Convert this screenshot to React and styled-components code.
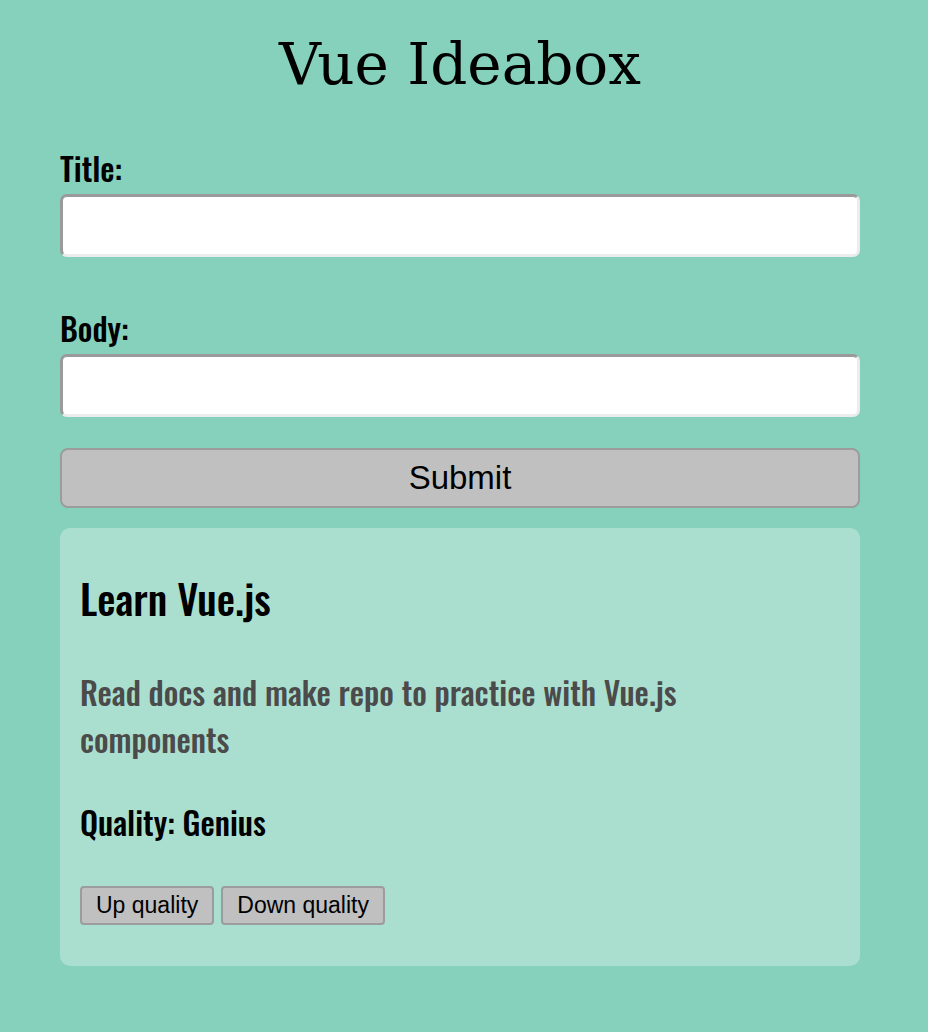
import React from 'react';
import styled, { createGlobalStyle } from 'styled-components';

const GlobalStyle = createGlobalStyle`
  html, body {
    margin: 0;
    padding: 0;
    background: #86d1bb;
  }
`;

const condensed = `"Oswald", "Liberation Sans Narrow", "DejaVu Sans Condensed", sans-serif`;

const Page = styled.div`
  width: 800px;
  padding: 0 60px 60px;
`;

const Heading = styled.h1`
  margin: 0;
  padding-top: 26px;
  text-align: center;
  font-family: "DejaVu Serif", "Liberation Serif", serif;
  font-weight: normal;
  font-size: 58px;
  line-height: 76px;
  color: #000;
`;

const Form = styled.form`
  display: flex;
  flex-direction: column;
  margin-top: 46px;
`;

const Label = styled.label`
  font-family: ${condensed};
  font-weight: 500;
  font-size: 32px;
  line-height: 40px;
  color: #000;
  margin-top: ${p => p.first ? '0' : '51px'};
`;

const Input = styled.input`
  box-sizing: border-box;
  width: 100%;
  height: 63px;
  margin-top: 6px;
  border: 3px solid;
  border-color: #9a9a9a #ececec #ececec #9a9a9a;
  border-radius: 7px;
  background: #fff;
  font-size: 24px;
  padding: 0 12px;
  outline: none;
`;

const SubmitButton = styled.button`
  box-sizing: border-box;
  width: 100%;
  height: 60px;
  margin-top: 31px;
  background: #c0c0c0;
  border: 2px solid #9c9c9c;
  border-radius: 8px;
  font-family: "Liberation Sans", Arial, sans-serif;
  font-size: 33px;
  color: #000;
`;

const Card = styled.div`
  margin-top: 20px;
  background: #aadfcf;
  border-radius: 10px;
  padding: 40px 20px 41px;
  font-family: ${condensed};
  font-weight: 500;
`;

const CardTitle = styled.h2`
  margin: 0;
  font-size: 41px;
  font-weight: 500;
  line-height: 60px;
  color: #000;
`;

const CardBody = styled.p`
  margin: 40px 0 0;
  font-size: 32px;
  line-height: 47px;
  color: #4b4b4b;
  max-width: 640px;
`;

const Quality = styled.p`
  margin: 38px 0 0;
  font-size: 32px;
  line-height: 44px;
  color: #000;
`;

const Actions = styled.div`
  display: flex;
  gap: 7px;
  margin-top: 42px;
`;

const SmallButton = styled.button`
  height: 39px;
  padding: 0 14px;
  background: #c0c0c0;
  border: 2px solid #9c9c9c;
  border-radius: 4px;
  font-family: "Liberation Sans", Arial, sans-serif;
  font-size: 23px;
  color: #000;
`;

export default function App() {
  return (
    <>
      <GlobalStyle />
      <Page>
        <Heading>Vue Ideabox</Heading>
        <Form onSubmit={e => e.preventDefault()}>
          <Label first htmlFor="title">Title:</Label>
          <Input id="title" type="text" />
          <Label htmlFor="body">Body:</Label>
          <Input id="body" type="text" />
          <SubmitButton type="submit">Submit</SubmitButton>
        </Form>
        <Card>
          <CardTitle>Learn Vue.js</CardTitle>
          <CardBody>Read docs and make repo to practice with Vue.js components</CardBody>
          <Quality>Quality: Genius</Quality>
          <Actions>
            <SmallButton>Up quality</SmallButton>
            <SmallButton>Down quality</SmallButton>
          </Actions>
        </Card>
      </Page>
    </>
  );
}
